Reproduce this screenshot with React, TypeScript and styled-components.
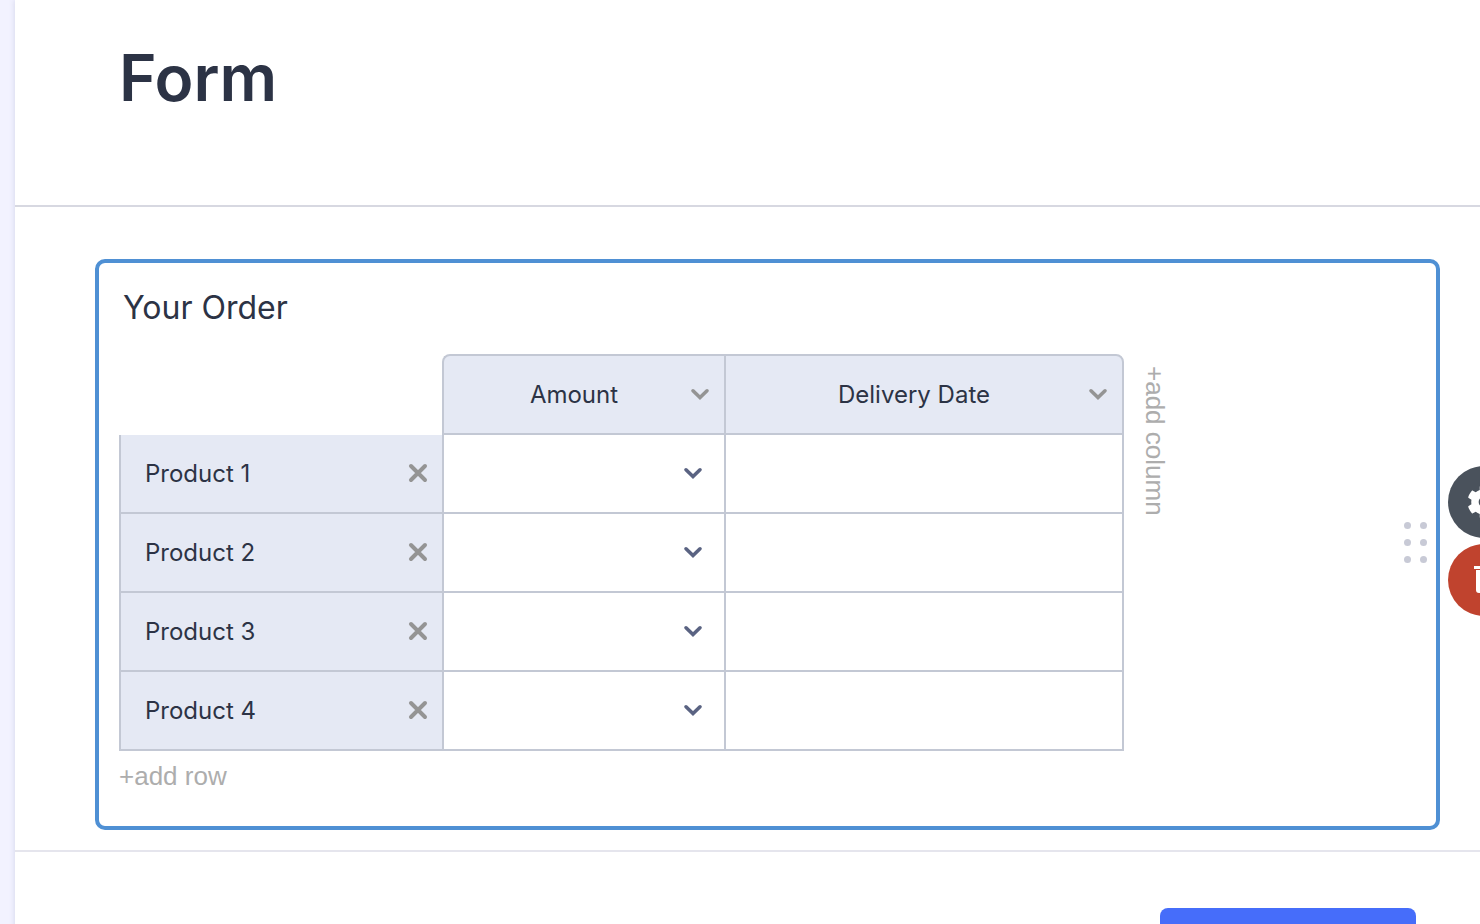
import React, { useState } from "react";
import styled, { createGlobalStyle } from "styled-components";
import { FaCog } from "react-icons/fa";

const colors = {
  ink: "#2c3345",
  line: "#c3c8d4",
  head: "#e5e9f4",
  select: "#5a6382",
  muted: "#949494",
  hint: "#adadad",
  accent: "#4f90d4",
};

const GlobalStyle = createGlobalStyle`
  *, *::before, *::after { box-sizing: border-box; }
  body {
    margin: 0;
    background: #f2f2ff;
    color: ${colors.ink};
    font-family: Inter, "Liberation Sans", sans-serif;
  }
  button, input, select { font: inherit; color: inherit; }
`;

const Shell = styled.div`
  height: 100vh;
  padding-left: 15px;
  overflow: hidden;
`;

const Sheet = styled.main`
  min-height: 100%;
  background: #fff;
  box-shadow: 0 0 6px rgba(84, 95, 140, 0.2);
`;

const Header = styled.header`
  padding: 38px 104px 87px;
  border-bottom: 2px solid #d7d8e1;
`;

const Title = styled.h1`
  margin: 0;
  font-size: 64px;
  line-height: 80px;
  font-weight: 600;
`;

const Body = styled.section`
  padding: 52px 40px 20px 80px;
`;

const Card = styled.div`
  position: relative;
  display: flex;
  align-items: center;
  justify-content: space-between;
  padding: 24px 9px 34px 20px;
  border: 4px solid ${colors.accent};
  border-radius: 10px;
`;

const Question = styled.div`
  flex: 1;
  min-width: 0;
`;

const Label = styled.h2`
  margin: 0 0 25px 4px;
  font-size: 32px;
  line-height: 42px;
  font-weight: 400;
`;

const MatrixRow = styled.div`
  display: flex;
  align-items: flex-start;
`;

const Matrix = styled.table`
  width: 1005px;
  table-layout: fixed;
  border-collapse: separate;
  border-spacing: 0;
  font-size: 24px;
  line-height: 32px;
`;

const Col = styled.col<{ $share: number }>`
  width: ${(p) => p.$share}%;
`;

const Corner = styled.td`
  padding: 0;
`;

const ColumnHead = styled.th<{ $first?: boolean; $last?: boolean }>`
  height: 81px;
  padding: 0 8px 0 20px;
  font-weight: 400;
  background: ${colors.head};
  border: 2px solid ${colors.line};
  border-right-width: ${(p) => (p.$last ? 2 : 0)}px;
  border-top-left-radius: ${(p) => (p.$first ? 8 : 0)}px;
  border-top-right-radius: ${(p) => (p.$last ? 8 : 0)}px;
`;

const HeadInner = styled.div`
  display: grid;
  grid-template-columns: 1fr 32px;
  align-items: center;
`;

const HeadText = styled.span`
  text-align: center;
`;

const RowHead = styled.th`
  height: 79px;
  padding: 0 8px 0 24px;
  font-weight: 400;
  text-align: left;
  background: ${colors.head};
  border-left: 2px solid ${colors.line};
  border-bottom: 2px solid ${colors.line};
`;

const RowInner = styled.div`
  display: flex;
  align-items: center;
  justify-content: space-between;
`;

const Cell = styled.td<{ $last?: boolean }>`
  height: 79px;
  padding: 0;
  border-left: 2px solid ${colors.line};
  border-bottom: 2px solid ${colors.line};
  border-right: ${(p) => (p.$last ? 2 : 0)}px solid ${colors.line};
`;

const IconButton = styled.button`
  display: flex;
  align-items: center;
  justify-content: center;
  width: 32px;
  height: 32px;
  padding: 0;
  border: 0;
  background: none;
  color: ${colors.muted};
  cursor: pointer;
`;

const Stack = styled.div`
  display: grid;
  grid-template-columns: 1fr 41px;
  align-items: center;
  height: 77px;
  color: ${colors.select};

  svg {
    grid-area: 1 / 2;
    pointer-events: none;
  }
`;

const Select = styled.select`
  grid-area: 1 / 1 / 2 / 3;
  width: 100%;
  height: 100%;
  padding: 0 48px 0 24px;
  border: 0;
  background: none;
  appearance: none;
`;

const TextInput = styled.input`
  display: block;
  width: 100%;
  height: 77px;
  padding: 0 24px;
  border: 0;
  background: none;
`;

const HintButton = styled.button<{ $vertical?: boolean }>`
  display: block;
  padding: 0;
  margin: ${(p) => (p.$vertical ? "12px 0 0 15px" : "9px 0 0")};
  border: 0;
  background: none;
  color: ${colors.hint};
  font-family: "Liberation Sans", Arial, sans-serif;
  font-size: 26px;
  line-height: 32px;
  white-space: nowrap;
  writing-mode: ${(p) => (p.$vertical ? "vertical-rl" : "horizontal-tb")};
  cursor: pointer;
`;

const Grip = styled.div`
  display: grid;
  grid-template-columns: 7px 7px;
  gap: 10px 9px;
  margin-top: 6px;
  cursor: grab;
`;

const Dot = styled.span`
  width: 7px;
  height: 7px;
  border-radius: 50%;
  background: #c8cad6;
`;

const Actions = styled.div`
  position: absolute;
  top: 203px;
  left: calc(100% + 12px);
  display: flex;
  flex-direction: column;
  gap: 6px;
`;

const ActionButton = styled.button<{ $danger?: boolean }>`
  display: flex;
  align-items: center;
  justify-content: center;
  width: 72px;
  height: 72px;
  padding: 0;
  border: 0;
  border-radius: 50%;
  color: #fff;
  background: ${(p) => (p.$danger ? "#c0432e" : "#4a525c")};
  cursor: pointer;
`;

const Footer = styled.footer`
  display: flex;
  justify-content: flex-end;
  padding: 56px 64px;
  border-top: 2px solid #e5e5ed;
`;

const Submit = styled.button`
  width: 256px;
  height: 80px;
  border: 0;
  border-radius: 8px;
  background: #466dfa;
  cursor: pointer;
`;

const Chevron = () => (
  <svg width="20" height="16" viewBox="0 0 20 16" fill="none" stroke="currentColor" strokeWidth="3.6" strokeLinecap="round" strokeLinejoin="miter" aria-hidden="true">
    <path d="M3 3.8 10 10.5 17 3.8" />
  </svg>
);

const Cross = () => (
  <svg width="20" height="22" viewBox="0 0 20 22" fill="none" stroke="currentColor" strokeWidth="4" strokeLinecap="round" aria-hidden="true">
    <path d="M3 3 17 17M17 3 3 17" />
  </svg>
);

const Trash = () => (
  <svg width="32" height="32" viewBox="0 0 32 32" fill="currentColor" aria-hidden="true">
    <path d="M6 2h6V0h8v2h6v3H6zM8 6h16v20a3 3 0 0 1-3 3H11a3 3 0 0 1-3-3z" />
  </svg>
);

const columns = ["Amount", "Delivery Date"];
const initialRows = ["Product 1", "Product 2", "Product 3", "Product 4"];

export default function App() {
  const [rows, setRows] = useState(initialRows);

  return (
    <>
      <GlobalStyle />
      <Shell>
        <Sheet>
          <Header>
            <Title>Form</Title>
          </Header>
          <Body>
            <Card>
              <Question>
                <Label id="order-label">Your Order</Label>
                <MatrixRow>
                  <Matrix aria-labelledby="order-label">
                    <colgroup>
                      <Col $share={32.14} />
                      <Col $share={28.06} />
                      <Col $share={39.8} />
                    </colgroup>
                    <thead>
                      <tr>
                        <Corner />
                        {columns.map((name, i) => (
                          <ColumnHead key={name} scope="col" $first={i === 0} $last={i === columns.length - 1}>
                            <HeadInner>
                              <HeadText>{name}</HeadText>
                              <IconButton type="button" aria-label={`${name} column options`}>
                                <Chevron />
                              </IconButton>
                            </HeadInner>
                          </ColumnHead>
                        ))}
                      </tr>
                    </thead>
                    <tbody>
                      {rows.map((name) => (
                        <tr key={name}>
                          <RowHead scope="row">
                            <RowInner>
                              {name}
                              <IconButton
                                type="button"
                                aria-label={`Remove ${name}`}
                                onClick={() => setRows(rows.filter((r) => r !== name))}
                              >
                                <Cross />
                              </IconButton>
                            </RowInner>
                          </RowHead>
                          <Cell>
                            <Stack>
                              <Select aria-label={`${name} amount`} defaultValue="">
                                <option value="" />
                              </Select>
                              <Chevron />
                            </Stack>
                          </Cell>
                          <Cell $last>
                            <TextInput type="text" aria-label={`${name} delivery date`} />
                          </Cell>
                        </tr>
                      ))}
                    </tbody>
                  </Matrix>
                  <HintButton type="button" $vertical>
                    +add column
                  </HintButton>
                </MatrixRow>
                <HintButton type="button" onClick={() => setRows([...rows, `Product ${rows.length + 1}`])}>
                  +add row
                </HintButton>
              </Question>
              <Grip aria-hidden="true">
                <Dot />
                <Dot />
                <Dot />
                <Dot />
                <Dot />
                <Dot />
              </Grip>
              <Actions>
                <ActionButton type="button" aria-label="Settings">
                  <FaCog size={34} />
                </ActionButton>
                <ActionButton type="button" aria-label="Delete" $danger>
                  <Trash />
                </ActionButton>
              </Actions>
            </Card>
          </Body>
          <Footer>
            <Submit type="submit" aria-label="Submit" />
          </Footer>
        </Sheet>
      </Shell>
    </>
  );
}
